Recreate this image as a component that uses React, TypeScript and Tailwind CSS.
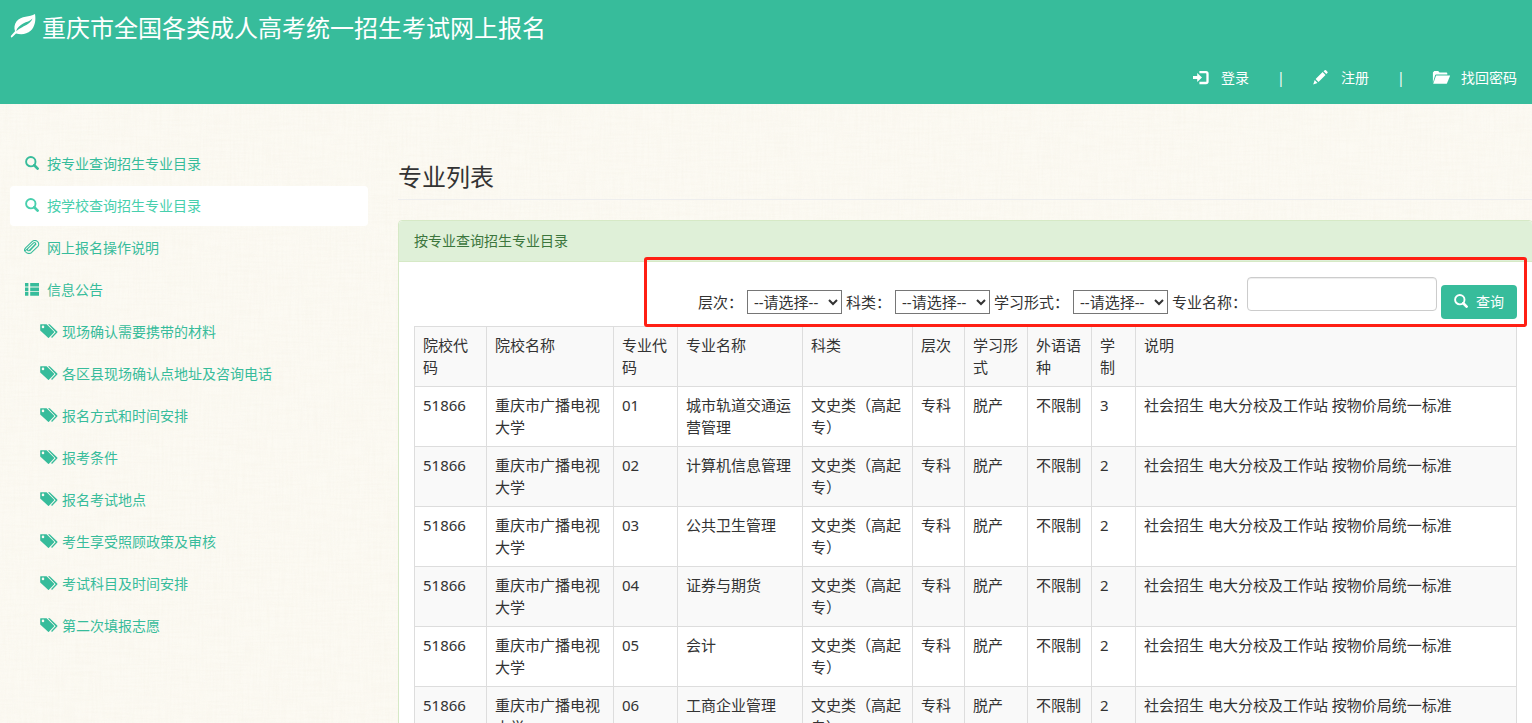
import type { ReactNode } from "react";

const sideLinks = [
  { icon: "search", label: "按专业查询招生专业目录", active: false },
  { icon: "search", label: "按学校查询招生专业目录", active: true },
  { icon: "clip", label: "网上报名操作说明", active: false },
  { icon: "list", label: "信息公告", active: false },
];

const notices = [
  "现场确认需要携带的材料",
  "各区县现场确认点地址及咨询电话",
  "报名方式和时间安排",
  "报考条件",
  "报名考试地点",
  "考生享受照顾政策及审核",
  "考试科目及时间安排",
  "第二次填报志愿",
];

const columns = [
  { label: "院校代码", width: "w-[72px]" },
  { label: "院校名称", width: "w-[127px]" },
  { label: "专业代码", width: "w-[64px]" },
  { label: "专业名称", width: "w-[125px]" },
  { label: "科类", width: "w-[110px]" },
  { label: "层次", width: "w-[52px]" },
  { label: "学习形式", width: "w-[63px]" },
  { label: "外语语种", width: "w-[64px]" },
  { label: "学制", width: "w-[44px]" },
  { label: "说明", width: "" },
];

const majors = [
  { code: "01", name: "城市轨道交通运营管理", years: "3" },
  { code: "02", name: "计算机信息管理", years: "2" },
  { code: "03", name: "公共卫生管理", years: "2" },
  { code: "04", name: "证券与期货", years: "2" },
  { code: "05", name: "会计", years: "2" },
  { code: "06", name: "工商企业管理", years: "2" },
];

function SearchIcon() {
  return (
    <svg viewBox="0 0 14 14" className="mb-0.5 h-3.5 w-3.5 shrink-0" aria-hidden="true">
      <circle cx="5.8" cy="5.7" r="4.7" fill="none" stroke="currentColor" strokeWidth="1.9" />
      <path d="M9.3 9.3 12.6 12.6" stroke="currentColor" strokeWidth="2.7" strokeLinecap="round" />
    </svg>
  );
}

function ClipIcon() {
  return (
    <svg viewBox="0 0 16 14" className="-mr-px -ml-px mb-0.5 h-3.5 w-4 shrink-0" aria-hidden="true">
      <path
        d="M3.6 8.6 9.6 2.9C10.8 1.8 12.3 3.3 11.2 4.5L5.3 10.4C4.2 11.4 2.9 10.1 3.8 9M3.6 8.6 2 10.2C.1 12.2-.1 9.8 1.6 7.8L7.8 1.8C9.2.5 11.6.2 13.3 1.4 15.2 2.8 15.1 5.2 13.7 6.7L7.4 12.7C5.6 14 2.7 13.6 1.5 11.8M11.9 4.2 5.9 10.6"
        fill="none"
        stroke="currentColor"
        strokeWidth="1.1"
        strokeLinecap="round"
      />
    </svg>
  );
}

function ListIcon() {
  return (
    <svg viewBox="0 0 14 14" className="mb-0.5 h-3.5 w-3.5 shrink-0" fill="currentColor" aria-hidden="true">
      <path d="M0 .9h3.4v3.7H0zM5.2.9H14v3.7H5.2zM0 5.5h3.4v3.7H0zM5.2 5.5H14v3.7H5.2zM0 10.1h3.4v3.7H0zM5.2 10.1H14v3.7H5.2z" />
    </svg>
  );
}

function TagsIcon() {
  return (
    <svg viewBox="0 0 18 15" className="mb-0.5 h-[15px] w-[18px] shrink-0" fill="currentColor" aria-hidden="true">
      <path
        fillRule="evenodd"
        d="M.6.2H6.6L14 7.6Q14.4 8 14 8.4L8.9 13.8Q8.5 14.2 8.1 13.8L.2 6.4V.7Q.2.2.6.2ZM3 1.6A1.3 1.3 0 1 0 3 4.2 1.3 1.3 0 1 0 3 1.6Z"
      />
      <path d="M8 .2H9.7L17.3 7.6Q17.7 8 17.3 8.4L12 13.9 11.1 13 15.6 8.2Z" />
    </svg>
  );
}

function LeafIcon() {
  return (
    <svg viewBox="0 0 26 26" className="mb-1 h-[26px] w-[26px] shrink-0" fill="currentColor" aria-hidden="true">
      <path
        fillRule="evenodd"
        d="M25 .9C19.8 4.2 11.2 2.4 6.6 8.2 4.2 11.3 4 15 5 18.2L1 22.7Q.6 23.6 1.1 24.4 1.8 24.5 2.4 24L6 20.4C10.9 21.9 16.8 21.4 20.6 17.8 25.2 13.4 26 6.6 25 .9ZM22.5 5.6C20.6 10.3 16.4 12 12.2 14.2 10 15.4 8 16.6 6.1 18.2 7 14.8 10 12.4 13.2 10.6 16.6 8.8 19.8 8.4 22.5 5.6Z"
      />
    </svg>
  );
}

function LoginIcon() {
  return (
    <svg viewBox="0 0 18 16" className="h-4 w-[18px] shrink-0" aria-hidden="true">
      <path d="M1 5.9H5.2V2.9L10 7.5 5.2 12.1V9.1H1Z" fill="currentColor" />
      <path d="M7.4 2.2H14Q15.5 2.2 15.5 3.7V11.5Q15.5 13 14 13H7.4" fill="none" stroke="currentColor" strokeWidth="2.3" />
    </svg>
  );
}

function PencilIcon() {
  return (
    <svg viewBox="0 0 18 16" className="h-4 w-[18px] shrink-0" fill="currentColor" aria-hidden="true">
      <path d="M1.2 14.4 2.7 10.1 5.5 12.9ZM3.6 9.1 10.6 2.1 13.5 5 6.5 12ZM11.5 1.3 12.7.2Q13.4-.2 14 .3L15.4 1.7Q15.9 2.4 15.4 3L14.3 4.1Z" />
    </svg>
  );
}

function FolderIcon() {
  return (
    <svg viewBox="0 0 18 16" className="h-4 w-[18px] shrink-0" fill="currentColor" aria-hidden="true">
      <path d="M.9 12.8V2.6L2.3 1.1H6.2L7.5 2.6H14.4Q15.3 2.6 15.3 3.5V4.5H4.1Q3.4 4.5 3.1 5.2Z" />
      <path d="M4.1 5.5H18.2L15 13.3Q14.7 13.8 14.2 13.8H1.2Z" />
    </svg>
  );
}

function SideIcon({ name }: { name: string }) {
  if (name === "search") return <SearchIcon />;
  if (name === "clip") return <ClipIcon />;
  return <ListIcon />;
}

function Linen() {
  return (
    <svg className="pointer-events-none absolute inset-0 -z-10 h-full w-full" aria-hidden="true">
      <filter id="weft" x="0" y="0" width="100%" height="100%">
        <feTurbulence type="fractalNoise" baseFrequency="0.03 0.5" numOctaves="2" seed="4" />
        <feColorMatrix values="0 0 0 0 .88  0 0 0 0 .84  0 0 0 0 .74  .9 0 0 0 -.3" />
      </filter>
      <filter id="warp" x="0" y="0" width="100%" height="100%">
        <feTurbulence type="fractalNoise" baseFrequency="0.5 0.03" numOctaves="2" seed="9" />
        <feColorMatrix values="0 0 0 0 .88  0 0 0 0 .84  0 0 0 0 .74  .9 0 0 0 -.3" />
      </filter>
      <rect width="100%" height="100%" filter="url(#weft)" opacity="0.35" />
      <rect width="100%" height="100%" filter="url(#warp)" opacity="0.35" />
    </svg>
  );
}

function TopLink({ icon, children }: { icon: ReactNode; children: ReactNode }) {
  return (
    <a href="#" className="flex items-center gap-[11px]">
      {icon}
      {children}
    </a>
  );
}

function Picker({ id, label }: { id: string; label: string }) {
  return (
    <div className="flex h-[34px] items-center gap-1">
      <label htmlFor={id}>{label}</label>
      <select id={id} className="h-6 w-[95px] border border-[#767676] bg-white pl-[2px] text-[15px] text-[#333]">
        <option>--请选择--</option>
      </select>
    </div>
  );
}

export default function App() {
  return (
    <div className="relative isolate h-screen overflow-hidden bg-[#fcfaf3] font-['Noto_Sans','Noto_Sans_CJK_SC',sans-serif] text-sm text-[#333]">
      <Linen />
      <header className="flex h-[104px] flex-col bg-[#37bc9b] text-white">
        <h1 className="flex h-14 items-center gap-[6px] pl-[10px] text-2xl">
          <LeafIcon />
          重庆市全国各类成人高考统一招生考试网上报名
        </h1>
        <nav className="flex h-11 items-center justify-end gap-7 pr-[15px]">
          <TopLink icon={<LoginIcon />}>登录</TopLink>
          <span className="w-[7px]">|</span>
          <TopLink icon={<PencilIcon />}>注册</TopLink>
          <span className="w-[7px]">|</span>
          <TopLink icon={<FolderIcon />}>找回密码</TopLink>
        </nav>
      </header>

      <div className="flex gap-[30px] pt-10 pl-[10px]">
        <aside className="w-[358px] shrink-0 text-[#37bc9b]">
          <ul className="flex flex-col gap-[2px]">
            {sideLinks.map((item) => (
              <li key={item.label}>
                <a
                  href="#"
                  className={
                    item.active
                      ? "flex h-10 items-center gap-2 rounded bg-white pl-[15px] text-[#48cfad]"
                      : "flex h-10 items-center gap-2 rounded pl-[15px]"
                  }
                >
                  <SideIcon name={item.icon} />
                  {item.label}
                </a>
              </li>
            ))}
            {notices.map((label) => (
              <li key={label}>
                <a href="#" className="flex h-10 items-center gap-1 pl-[30px]">
                  <TagsIcon />
                  {label}
                </a>
              </li>
            ))}
          </ul>
        </aside>

        <main className="-mr-px min-w-0 flex-1 pt-[14px]">
          <h2 className="mb-5 h-[42px] border-b border-[#eee] text-2xl leading-[38px]">专业列表</h2>
          <section className="rounded border border-[#d6e9c6] bg-white">
            <h3 className="rounded-t border-b border-[#d6e9c6] bg-[#dff0d8] px-[15px] py-[10px] leading-5 text-[#3c763d]">
              按专业查询招生专业目录
            </h3>
            <div className="p-[15px] text-[15px] leading-[22px]">
              <form className="relative mb-[7px] ml-auto flex h-[42px] w-fit items-end gap-1">
                <Picker id="level" label="层次：" />
                <Picker id="category" label="科类：" />
                <Picker id="mode" label="学习形式：" />
                <div className="flex h-full">
                  <label htmlFor="major" className="self-end leading-[34px]">
                    专业名称：
                  </label>
                  <input
                    id="major"
                    type="text"
                    className="h-[34px] w-[190px] rounded border border-[#ccc] bg-white px-3 shadow-[inset_0_1px_1px_rgba(0,0,0,0.075)]"
                  />
                </div>
                <button
                  type="button"
                  className="flex h-[34px] w-[76px] items-center justify-center gap-2 rounded bg-[#37bc9b] text-sm text-white"
                >
                  <SearchIcon />
                  查询
                </button>
                <span className="pointer-events-none absolute -top-5 -right-[10px] -bottom-2 -left-[54px] rounded-[3px] border-3 border-[#ff1f14]" />
              </form>
              <table className="w-full table-fixed border-collapse">
                <thead>
                  <tr className="bg-[#f9f9f9]">
                    {columns.map((column) => (
                      <th
                        key={column.label}
                        className={`${column.width} border border-[#ddd] px-2 pt-[7px] pb-2 text-left align-top font-normal`}
                      >
                        {column.label}
                      </th>
                    ))}
                  </tr>
                </thead>
                <tbody>
                  {majors.map((major) => (
                    <tr key={major.code} className="even:bg-[#f9f9f9]">
                      {[
                        "51866",
                        "重庆市广播电视大学",
                        major.code,
                        major.name,
                        "文史类（高起专）",
                        "专科",
                        "脱产",
                        "不限制",
                        major.years,
                        "社会招生 电大分校及工作站 按物价局统一标准",
                      ].map((value, index) => (
                        <td key={index} className="border border-[#ddd] px-2 pt-[7px] pb-2 align-top">
                          {value}
                        </td>
                      ))}
                    </tr>
                  ))}
                </tbody>
              </table>
            </div>
          </section>
        </main>
      </div>
    </div>
  );
}
